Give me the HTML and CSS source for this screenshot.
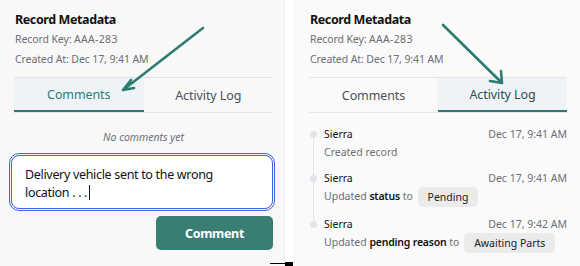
FILE: index.html
```html
<!DOCTYPE html>
<html>
<head>
<meta charset="utf-8">
<link rel="stylesheet" href="styles.css">
</head>
<body>
<div class="stage">
  <section class="panel panel-left">
    <div class="meta">
      <h2 class="meta-title">Record Metadata</h2>
      <div class="meta-line">Record Key: <span class="key">AAA-283</span></div>
      <div class="meta-line">Created At: Dec 17, 9:41 AM</div>
    </div>
    <div class="tabs">
      <div class="tab active">Comments</div>
      <div class="tab">Activity Log</div>
    </div>
    <p class="empty">No comments yet</p>
    <div class="input">Delivery vehicle sent to the wrong<br>location . . .<span class="caret"></span></div>
    <div class="actions"><button class="btn">Comment</button></div>
    <svg class="arrow" width="285" height="120" viewBox="0 0 285 120">
      <path d="M203 28 L123 90 M123 90 L131 80 M123 90 L134 88" fill="none" stroke="#2e7b70" stroke-width="2.6" stroke-linecap="round" stroke-linejoin="round"/>
    </svg>
  </section>
  <section class="panel panel-right">
    <div class="meta">
      <h2 class="meta-title">Record Metadata</h2>
      <div class="meta-line">Record Key: <span class="key">AAA-283</span></div>
      <div class="meta-line">Created At: Dec 17, 9:41 AM</div>
    </div>
    <div class="tabs">
      <div class="tab">Comments</div>
      <div class="tab active dark">Activity Log</div>
    </div>
    <ul class="log">
      <li class="entry">
        <div class="row"><span class="who">Sierra</span><span class="when">Dec 17, 9:41 AM</span></div>
        <div class="what">Created record</div>
      </li>
      <li class="entry">
        <div class="row"><span class="who">Sierra</span><span class="when">Dec 17, 9:41 AM</span></div>
        <div class="what">Updated <b>status</b> to <span class="chip">Pending</span></div>
      </li>
      <li class="entry last">
        <div class="row"><span class="who">Sierra</span><span class="when">Dec 17, 9:42 AM</span></div>
        <div class="what">Updated <b>pending reason</b> to <span class="chip">Awaiting Parts</span></div>
      </li>
    </ul>
    <svg class="arrow" width="287" height="120" viewBox="293 0 287 120">
      <path d="M443 25 L502 83 M502 83 L490 81 M502 83 L501 71" fill="none" stroke="#2e7b70" stroke-width="2.6" stroke-linecap="round" stroke-linejoin="round"/>
    </svg>
  </section>
  <div class="tick"></div>
</div>
</body>
</html>
```

FILE: styles.css
```css
* { box-sizing: border-box; }
html, body { margin: 0; padding: 0; background: #ffffff; }
body {
  font-family: "Noto Sans", "Open Sans", sans-serif;
  color: #222;
  width: 580px;
  height: 266px;
  overflow: hidden;
}
.stage {
  position: relative;
  display: flex;
  gap: 8px;
  height: 266px;
}
.panel {
  position: relative;
  height: 266px;
  background: #f8f8f8;
}
.panel-left {
  width: 285px;
  padding: 10px 11px 0 14px;
  border-right: 1px solid #efefef;
}
.panel-right {
  width: 287px;
  padding: 10px 13px 0 16px;
  background: #fafafa;
}
.meta { padding-left: 1px; }
.meta-title {
  margin: 0;
  font-size: 12.5px;
  font-weight: 700;
  line-height: 20px;
  color: #111;
  letter-spacing: -0.4px;
}
.meta-line {
  font-size: 10.5px;
  line-height: 19.5px;
  color: #6b6f76;
  letter-spacing: -0.1px;
}
.key { letter-spacing: 0.3px; }
.tabs {
  margin-top: 8px;
  display: grid;
  grid-template-columns: 1fr 1fr;
  border-top: 1px solid #e3e5e8;
  border-bottom: 1px solid #e3e5e8;
}
.tab {
  height: 34px;
  display: flex;
  align-items: center;
  justify-content: center;
  font-size: 12.5px;
  color: #4b5058;
  letter-spacing: -0.1px;
  padding-top: 1px;
}
.tab.active {
  background: #eff3f8;
  color: #2e7b70;
  border-bottom: 2px solid #2e7b70;
  margin-bottom: -1px;
}
.tab.active.dark { color: #2d4f50; }
.empty {
  margin: 16px 0 0;
  text-align: center;
  font-size: 10.5px;
  font-style: italic;
  color: #6b6f76;
  line-height: 16px;
}
.input {
  margin: 10px 0 0 -3px;
  height: 54px;
  border: 1px solid #3d63e6;
  outline: 1px solid #3d63e6;
  outline-offset: 1px;
  border-radius: 8px;
  background: #fff;
  padding: 10px 13px 0;
  font-size: 12.5px;
  line-height: 18px;
  color: #111;
  letter-spacing: -0.32px;
}
.caret {
  display: inline-block;
  width: 1px;
  height: 15px;
  background: #111;
  vertical-align: -3px;
  margin-left: 2px;
}
.actions {
  display: flex;
  justify-content: flex-end;
  margin-top: 7px;
}
.btn {
  width: 117px;
  height: 34px;
  border: none;
  border-radius: 5px;
  background: #3a7d72;
  color: #fff;
  font-family: inherit;
  font-size: 12.5px;
  font-weight: 700;
  letter-spacing: -0.3px;
}
.arrow {
  position: absolute;
  left: 0;
  top: 0;
  pointer-events: none;
}
.log {
  list-style: none;
  margin: 12px 0 0;
  padding: 0 0 0 15px;
}
.entry {
  position: relative;
  padding-bottom: 8px;
}
.entry::before {
  content: "";
  position: absolute;
  left: -14px;
  top: 6px;
  width: 7px;
  height: 7px;
  border-radius: 50%;
  background: #e1e5eb;
}
.entry::after {
  content: "";
  position: absolute;
  left: -11px;
  top: 13px;
  bottom: -6px;
  width: 1px;
  background: #e3e3e3;
}
.entry.last::after { display: none; }
.row {
  display: flex;
  justify-content: space-between;
  font-size: 10.5px;
  line-height: 18px;
}
.who { color: #111; }
.when { color: #6b6f76; }
.what {
  font-size: 10.5px;
  line-height: 18px;
  color: #6b6f76;
  min-height: 18px;
}
.what b { font-weight: 600; color: #111; letter-spacing: -0.2px; }
.chip {
  display: inline-block;
  background: #ebebeb;
  color: #222;
  border-radius: 5px;
  padding: 0 10px;
  line-height: 20px;
  vertical-align: middle;
  margin-left: 2px;
}
.tick {
  position: absolute;
  left: 270px;
  top: 263px;
  width: 23px;
  height: 1px;
  background: #000;
}
.tick::after {
  content: "";
  position: absolute;
  right: 0;
  top: -1px;
  width: 8px;
  height: 4px;
  background: #000;
}
```
